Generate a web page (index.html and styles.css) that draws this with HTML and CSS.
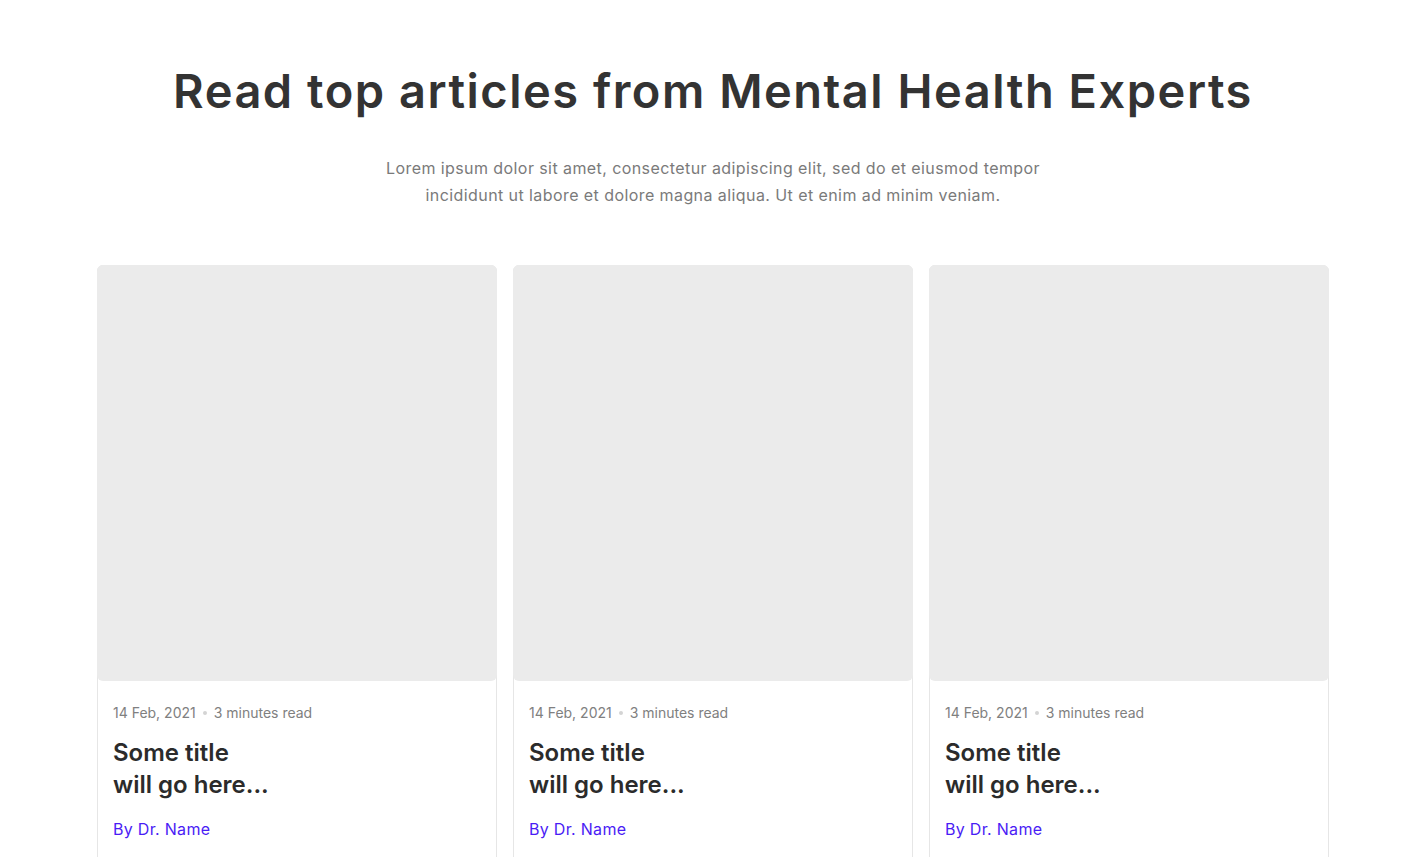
FILE: index.html
```html
<!DOCTYPE html>
<html lang="en">
<head>
<meta charset="utf-8">
<title>Read top articles</title>
<link rel="stylesheet" href="styles.css">
</head>
<body>
<section class="articles">
  <h1 class="articles__title">Read top articles from Mental Health Experts</h1>
  <p class="articles__lead">Lorem ipsum dolor sit amet, consectetur adipiscing elit, sed do et eiusmod tempor incididunt ut labore et dolore magna aliqua. Ut et enim ad minim veniam.</p>
  <div class="cards">
    <article class="card">
      <div class="card__image"></div>
      <div class="card__body">
        <div class="card__meta"><span>14 Feb, 2021</span><span class="card__dot"></span><span>3 minutes read</span></div>
        <h2 class="card__title">Some title<br>will go here...</h2>
        <div class="card__author">By Dr. Name</div>
      </div>
    </article>
    <article class="card">
      <div class="card__image"></div>
      <div class="card__body">
        <div class="card__meta"><span>14 Feb, 2021</span><span class="card__dot"></span><span>3 minutes read</span></div>
        <h2 class="card__title">Some title<br>will go here...</h2>
        <div class="card__author">By Dr. Name</div>
      </div>
    </article>
    <article class="card">
      <div class="card__image"></div>
      <div class="card__body">
        <div class="card__meta"><span>14 Feb, 2021</span><span class="card__dot"></span><span>3 minutes read</span></div>
        <h2 class="card__title">Some title<br>will go here...</h2>
        <div class="card__author">By Dr. Name</div>
      </div>
    </article>
  </div>
</section>
</body>
</html>
```

FILE: styles.css
```css
* { box-sizing: border-box; }
html, body { margin: 0; background: #ffffff; }
body {
  font-family: Inter, "Noto Sans", sans-serif;
  padding-left: 7px;
  overflow: hidden;
}
.articles {
  width: 1232px;
  margin: 0 auto;
  padding-top: 55px;
  display: flex;
  flex-direction: column;
  align-items: center;
}
.articles__title {
  margin: 0;
  font-size: 47px;
  line-height: 72px;
  font-weight: 600;
  color: #333333;
  letter-spacing: 1.5px;
  text-align: center;
}
.articles__lead {
  margin: 28px 0 0;
  width: 700px;
  font-size: 16px;
  line-height: 27px;
  color: #7a7a7a;
  text-align: center;
  font-weight: 400;
  letter-spacing: 0.42px;
}
.cards {
  margin-top: 56px;
  width: 100%;
  display: grid;
  grid-template-columns: repeat(3, 400px);
  gap: 16px;
}
.card {
  border: 1px solid #e6e6e6;
  border-radius: 6px;
  height: 640px;
}
.card__image {
  margin: -1px -1px 0;
  height: 416px;
  background: #ebebeb;
  border-radius: 6px;
}
.card__body { padding: 22px 15px 0; }
.card__meta {
  display: flex;
  align-items: center;
  gap: 7px;
  font-size: 14px;
  line-height: 20px;
  color: #808080;
}
.card__dot {
  width: 4px;
  height: 4px;
  border-radius: 50%;
  background: #d4d4d4;
}
.card__title {
  margin: 14px 0 0;
  font-size: 24px;
  line-height: 32px;
  font-weight: 600;
  color: #2b2b2b;
}
.card__author {
  margin-top: 16px;
  font-size: 16px;
  line-height: 24px;
  color: #4a1cf5;
  letter-spacing: 0.3px;
}
```
